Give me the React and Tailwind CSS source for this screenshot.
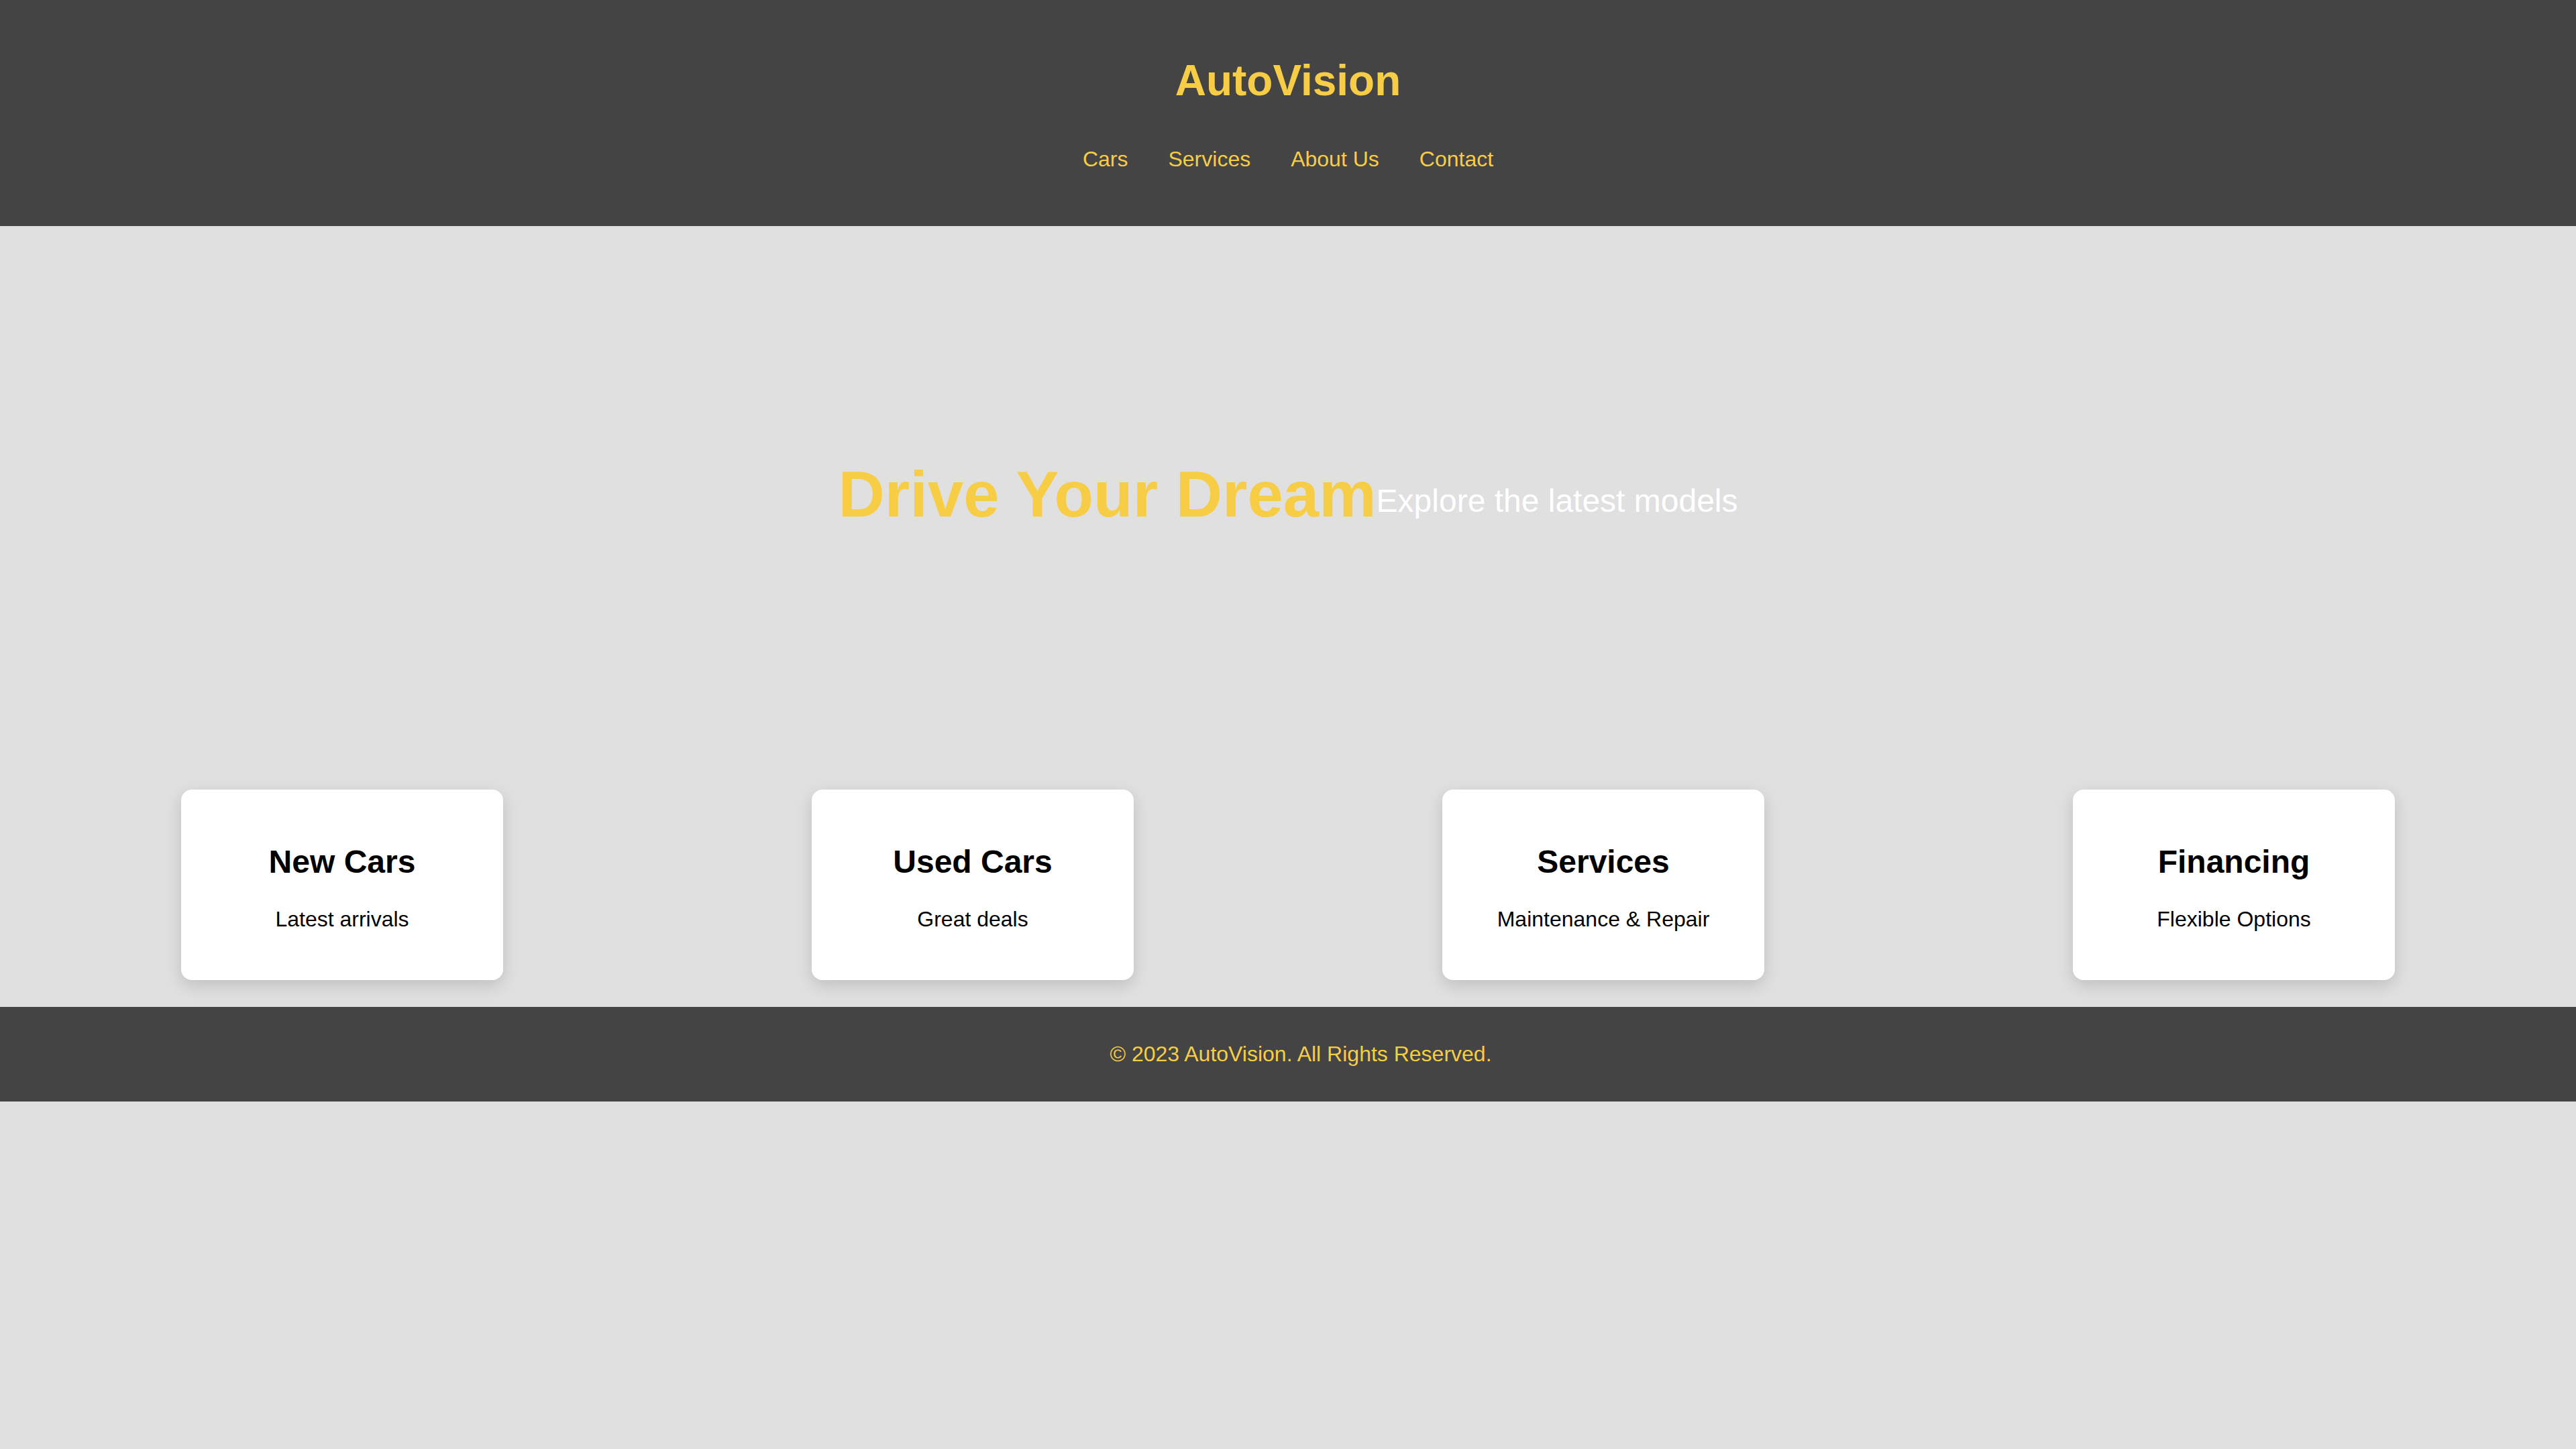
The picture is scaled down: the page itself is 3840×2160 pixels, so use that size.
import React from 'react';

const links = ['Cars', 'Services', 'About Us', 'Contact'];

const cards = [
  { title: 'New Cars', text: 'Latest arrivals' },
  { title: 'Used Cars', text: 'Great deals' },
  { title: 'Services', text: 'Maintenance & Repair' },
  { title: 'Financing', text: 'Flexible Options' },
];

export default function App() {
  return (
    <div className="min-h-screen bg-[#e0e0e0] font-['Liberation_Sans',Arial,sans-serif]">
      {/* Header */}
      <header className="bg-[#444444] pt-[83px] pb-[81px] text-center text-[#f7cd46]">
        <h1 className="text-[64px] font-bold leading-[74px]">AutoVision</h1>
        <nav className="mt-[62px] flex justify-center gap-[60px] text-[32px] leading-[37px]">
          {links.map((l) => (
            <a key={l} href="#" className="text-[#f7cd46]">
              {l}
            </a>
          ))}
        </nav>
      </header>

      {/* Hero */}
      <section className="flex h-[800px] items-center justify-center">
        <h1 className="text-[96px] font-bold leading-[110px] text-[#f7cd46]">Drive Your Dream</h1>
        <p className="mt-[18px] text-[48px] leading-[55px] text-white">Explore the latest models</p>
      </section>

      {/* Cards */}
      <section className="flex justify-around p-[40px]">
        {cards.map((c) => (
          <div
            key={c.title}
            className="w-[480px] rounded-[16px] bg-white p-[40px] text-center text-black shadow-[0_8px_24px_rgba(0,0,0,0.15)]"
          >
            <h2 className="my-[40px] text-[48px] font-bold leading-[55px]">{c.title}</h2>
            <p className="mb-[32px] text-[32px] leading-[37px]">{c.text}</p>
          </div>
        ))}
      </section>

      {/* Footer */}
      <footer className="flex h-[141px] items-center justify-center bg-[#444444] pl-[38px]">
        <p className="text-[32px] leading-[37px] text-[#f7cd46]">© 2023 AutoVision. All Rights Reserved.</p>
      </footer>
    </div>
  );
}
